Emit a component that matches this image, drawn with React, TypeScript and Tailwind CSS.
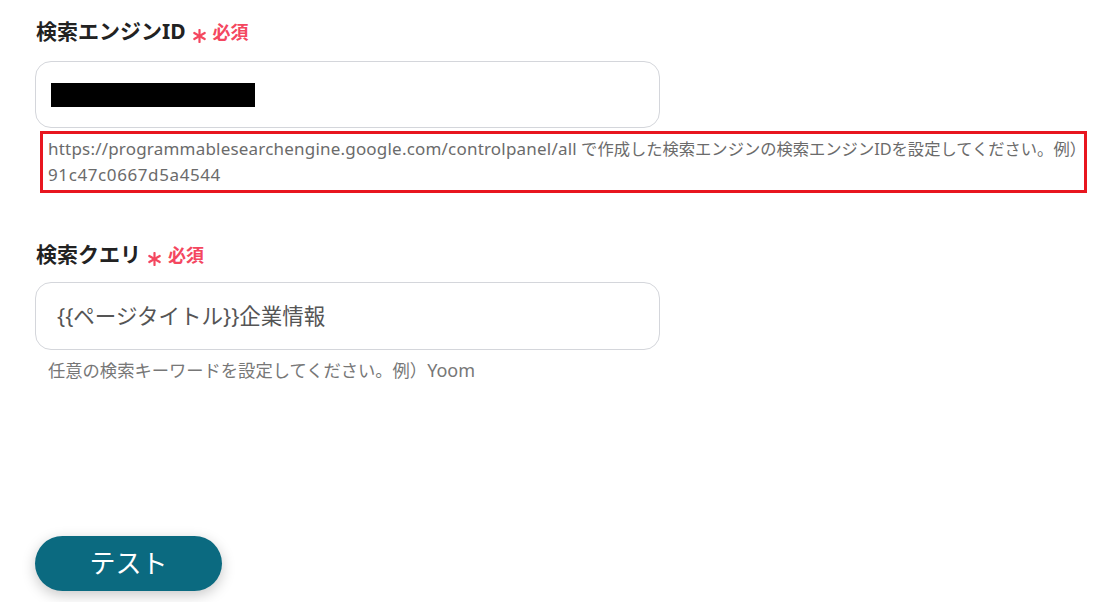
import React from 'react';

const font = { fontFamily: '"Noto Sans", "Noto Sans CJK JP", sans-serif' };

const Required = () => (
  <span className="ml-[7px] flex items-center gap-[7px] text-[#f4475f]">
    <svg width="13" height="14" viewBox="0 0 13 14" className="mt-[7px]">
      <g stroke="#f4475f" strokeWidth="2.2" strokeLinecap="round">
        <line x1="6.5" y1="1" x2="6.5" y2="13" />
        <line x1="1.3" y1="4" x2="11.7" y2="10" />
        <line x1="1.3" y1="10" x2="11.7" y2="4" />
      </g>
    </svg>
    <span className="text-[18px] font-bold">必須</span>
  </span>
);

export default function App() {
  return (
    <div className="w-[1103px] h-[602px] bg-white overflow-hidden pl-[35px] pt-[17px]" style={font}>
      {/* field 1 */}
      <div className="flex items-center h-[30px] pl-[1px]">
        <span className="text-[21px] font-bold text-[#222]">検索エンジンID</span>
        <Required />
      </div>
      <div className="mt-[14px] w-[625px] h-[67px] rounded-[16px] border border-[#d4d6db] flex items-center pl-[15px]">
        <div className="w-[204px] h-[24px] bg-black" />
      </div>
      <div className="mt-[3px] ml-[5px] w-[1047px] h-[62px] border-[3px] border-[#e8161f] pl-[5px] pt-[2px] text-[16.3px] leading-[26px] text-[#6b6b6b] whitespace-nowrap">
        <span className="text-[17px] tracking-[0.2px]">https://programmablesearchengine.google.com/controlpanel/all</span>{' '}
        で作成した検索エンジンの検索エンジンIDを設定してください。例）
        <br />
        <span className="text-[17px] tracking-[0.6px]">91c47c0667d5a4544</span>
      </div>

      {/* field 2 */}
      <div className="mt-[47px] flex items-center h-[30px] pl-[1px]">
        <span className="text-[21px] font-bold text-[#222]">検索クエリ</span>
        <Required />
      </div>
      <div className="mt-[12px] w-[625px] h-[68px] rounded-[16px] border border-[#d4d6db] flex items-center pl-[21px]">
        <span className="text-[21.5px] text-[#555]">{'{{ページタイトル}}企業情報'}</span>
      </div>
      <div className="mt-[7px] pl-[13px] text-[17.3px] leading-[26px] text-[#777]">
        任意の検索キーワードを設定してください。例）<span className="text-[18px]">Yoom</span>
      </div>

      <button className="mt-[152px] w-[187px] h-[55px] rounded-full bg-[#0b6a80] text-white text-[26px] shadow-[0_4px_14px_rgba(0,0,0,0.22)]">
        テスト
      </button>
    </div>
  );
}
